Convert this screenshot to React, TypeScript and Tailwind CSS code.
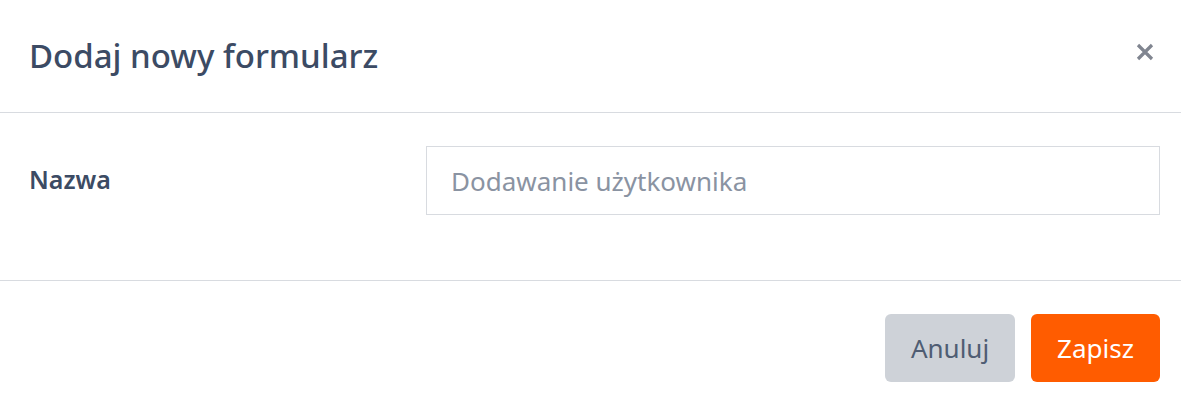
import React from "react";

export default function App() {
  return (
    <div
      className="w-[1181px] h-[406px] bg-white flex flex-col"
      style={{ fontFamily: '"Noto Sans", "Open Sans", sans-serif' }}
    >
      <div className="h-[113px] flex items-center justify-between pl-[29px] pr-[24px] border-b border-[#d8dbe0]">
        <h1 className="text-[33px] font-medium text-[#3c4b64] leading-none -mt-[1px]">Dodaj nowy formularz</h1>
        <button className="w-[24px] h-[24px] flex items-center justify-center -mt-[8px]">
          <svg width="20" height="20" viewBox="0 0 20 20">
            <path d="M3 3 L17 17 M17 3 L3 17" stroke="#808590" strokeWidth="3.2" strokeLinecap="butt" />
          </svg>
        </button>
      </div>
      <div className="h-[168px] flex items-start pt-[33px] pl-[29px] pr-[21px] border-b border-[#d8dbe0]">
        <label className="w-[397px] h-[68px] flex items-center text-[25px] font-semibold text-[#3c4b64]">Nazwa</label>
        <input
          className="flex-1 h-[69px] border border-[#d8dbe0] px-[24px] text-[26px] text-[#3c4b64] placeholder:text-[#8a93a2] outline-none"
          placeholder="Dodawanie użytkownika"
        />
      </div>
      <div className="flex-1 flex items-start pt-[33px] justify-end gap-[16px] pr-[21px]">
        <button className="w-[130px] h-[68px] rounded-[6px] bg-[#ced2d8] text-[#4f5d73] text-[26px]">Anuluj</button>
        <button className="w-[129px] h-[68px] rounded-[6px] bg-[#ff5c00] text-white text-[26px]">Zapisz</button>
      </div>
    </div>
  );
}
